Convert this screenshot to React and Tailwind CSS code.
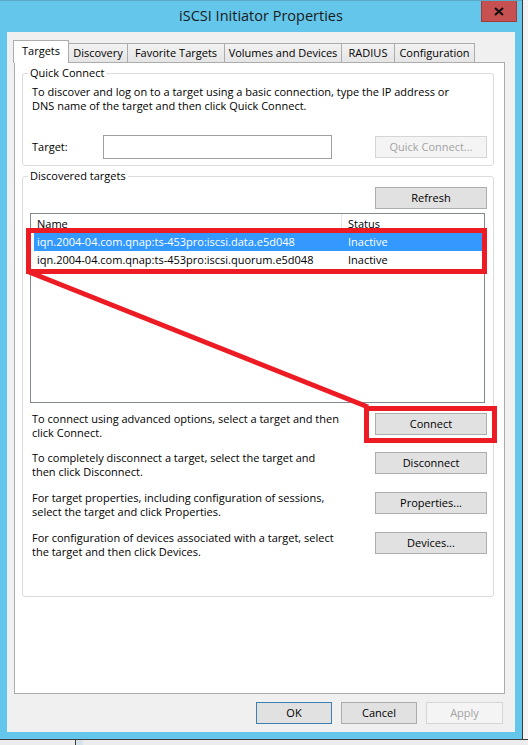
import React from 'react';

const tabs = [
  { label: 'Targets', w: 'w-[56px]', active: true },
  { label: 'Discovery', w: 'w-[59px]' },
  { label: 'Favorite Targets', w: 'w-[97px]' },
  { label: 'Volumes and Devices', w: 'w-[117px]' },
  { label: 'RADIUS', w: 'w-[53px]' },
  { label: 'Configuration', w: 'w-[80px]' },
];

const targets = [
  { name: 'iqn.2004-04.com.qnap:ts-453pro:iscsi.data.e5d048', status: 'Inactive', selected: true },
  { name: 'iqn.2004-04.com.qnap:ts-453pro:iscsi.quorum.e5d048', status: 'Inactive' },
];

const actions = [
  { lines: ['To connect using advanced options, select a target and then', 'click Connect.'], button: 'Connect', h: 'h-[39px]' },
  { lines: ['To completely disconnect a target, select the target and', 'then click Disconnect.'], button: 'Disconnect', h: 'h-[40px]' },
  { lines: ['For target properties, including configuration of sessions,', 'select the target and click Properties.'], button: 'Properties...', h: 'h-[40px]' },
  { lines: ['For configuration of devices associated with a target, select', 'the target and then click Devices.'], button: 'Devices...', h: 'h-[23px]' },
];

// plain windows push button
const Btn = ({ children, className = '', disabled = false, primary = false }) => (
  <div
    className={
      'flex items-center justify-center h-[22px] border ' +
      (disabled
        ? 'bg-[#f4f4f4] border-[#d5d5d5] text-[#a3a3a3] '
        : primary
        ? 'bg-[#e1e1e1] border-[#3c7fb1] text-black '
        : 'bg-[#e1e1e1] border-[#adadad] text-black ') +
      className
    }
  >
    {children}
  </div>
);

const App = () => {
  return (
    <div className="relative w-[528px] h-[745px] overflow-hidden bg-[#eaeaea] font-['Open_Sans','Noto_Sans',sans-serif] text-[11px] leading-[14px] text-black">
      <div className="flex">
        {/* window */}
        <div className="w-[522px] h-[739px] bg-[#63c6ea] border-t border-[#5aa9c9] flex flex-col">
          {/* title bar */}
          <div className="flex h-[31px] items-start">
            <div className="w-[41px]" />
            <div className="flex-1 text-center text-[14.5px] leading-[18px] pt-[6px] text-[#1b1b1b]">
              iSCSI Initiator Properties
            </div>
            <div className="w-[36px] h-[21px] mr-[5px] bg-[#c75050] border border-[#9e3b3b] border-t-0 flex items-center justify-center">
              <svg width="10" height="9" viewBox="0 0 10 9">
                <path d="M1 1 L9 8 M9 1 L1 8" stroke="#111" strokeWidth="2.2" />
              </svg>
            </div>
          </div>

          {/* client area */}
          <div className="mx-[7px] h-[700px] bg-[#f0f0f0] pt-[8px] flex flex-col">
            {/* tabs */}
            <div className="flex items-end h-[22px] pl-[6px]">
              {tabs.map((t) =>
                t.active ? (
                  <div
                    key={t.label}
                    className={t.w + ' relative z-10 h-[23px] -mb-px bg-white border border-b-0 border-[#acacac] flex items-start justify-center pt-[3px]'}
                  >
                    {t.label}
                  </div>
                ) : (
                  <div
                    key={t.label}
                    className={t.w + ' h-[19px] bg-gradient-to-b from-[#f2f2f2] to-[#e5e5e5] border border-b-0 border-l-0 border-[#acacac] flex items-center justify-center whitespace-nowrap'}
                  >
                    {t.label}
                  </div>
                )
              )}
            </div>

            {/* tab panel */}
            <div className="ml-[7px] w-[491px] h-[632px] bg-white border border-[#acacac]">
              {/* Quick Connect */}
              <fieldset className="ml-[7px] mt-[2px] w-[472px] border border-[#dcdcdc] rounded-[3px]">
                <legend className="ml-[5px] px-[2px] leading-[16px]">Quick Connect</legend>
                <div className="pl-[9px] pt-[4px] pb-[6px]">
                  <div className="whitespace-nowrap">
                    To discover and log on to a target using a basic connection, type the IP address or
                    <br />
                    DNS name of the target and then click Quick Connect.
                  </div>
                  <div className="flex items-center h-[24px] mt-[22px]">
                    <div className="w-[71px]">Target:</div>
                    <div className="w-[229px] h-[24px] border border-[#a0a0a0] bg-white" />
                    <Btn disabled className="w-[112px] ml-[43px]">Quick Connect...</Btn>
                  </div>
                </div>
              </fieldset>

              {/* Discovered targets */}
              <fieldset className="ml-[7px] mt-[2px] w-[472px] border border-[#dcdcdc] rounded-[3px]">
                <legend className="ml-[5px] px-[2px] leading-[16px]">Discovered targets</legend>
                <div className="pl-[7px] pr-[6px] pb-[42px]">
                  <div className="flex justify-end mt-[3px]">
                    <Btn className="w-[112px]">Refresh</Btn>
                  </div>

                  {/* list view */}
                  <div className="mt-[4px] w-[455px] h-[190px] border border-[#828790] bg-white">
                    <div className="flex h-[19px] items-center">
                      <div className="w-[311px] h-full pl-[6px] border-r border-[#e5e5e5] flex items-center">Name</div>
                      <div className="pl-[6px]">Status</div>
                    </div>
                    {targets.map((t) => (
                      <div
                        key={t.name}
                        className={
                          'flex h-[18px] items-center ml-[3px] mr-px whitespace-nowrap ' +
                          (t.selected ? 'bg-[#3399ff] text-white' : '')
                        }
                      >
                        <div className="w-[314px] pl-[3px]">{t.name}</div>
                        <div>{t.status}</div>
                      </div>
                    ))}
                  </div>

                  {/* actions */}
                  <div className="mt-[9px] flex flex-col">
                    {actions.map((a) => (
                      <div key={a.button} className={'flex justify-between items-start pl-[2px] ' + a.h}>
                        <div className="whitespace-nowrap">
                          {a.lines[0]}
                          <br />
                          {a.lines[1]}
                        </div>
                        <Btn className="w-[112px] mt-px">{a.button}</Btn>
                      </div>
                    ))}
                  </div>
                </div>
              </fieldset>
            </div>

            {/* dialog buttons */}
            <div className="flex justify-end gap-[9px] mt-[8px] pr-[12px]">
              <Btn primary className="w-[76px]">OK</Btn>
              <Btn className="w-[76px]">Cancel</Btn>
              <Btn disabled className="w-[77px]">Apply</Btn>
            </div>
          </div>
        </div>

        {/* neighbouring window edge */}
        <div className="w-[6px] h-[739px] border-l border-[#3a3a3a] bg-[#f4f4f4]" />
      </div>

      {/* desktop strip below */}
      <div className="flex h-[6px] border-t border-[#3c3c3c] bg-[#ececec]">
        <div className="w-[75px]" />
        <div className="w-px bg-[#3c3c3c]" />
        <div className="w-[7px] bg-[#d6e4ea]" />
      </div>

      {/* red annotation */}
      <svg className="absolute inset-0 pointer-events-none" width="528" height="745" viewBox="0 0 528 745">
        <rect x="28.5" y="230.5" width="456" height="41" fill="none" stroke="#ed1c24" strokeWidth="5" />
        <rect x="366.5" y="408.5" width="128" height="32" fill="none" stroke="#ed1c24" strokeWidth="5" />
        <line x1="29" y1="272" x2="368" y2="407" stroke="#ed1c24" strokeWidth="5" />
      </svg>
    </div>
  );
};

export default App;
